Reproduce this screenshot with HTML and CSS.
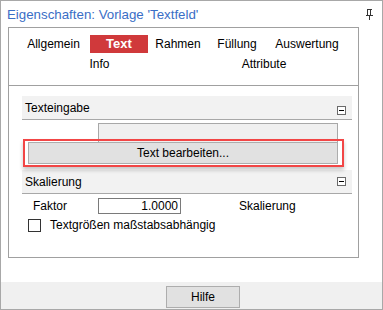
FILE: index.html
```html
<!DOCTYPE html>
<html>
<head>
<meta charset="utf-8">
<link rel="stylesheet" href="styles.css">
</head>
<body>
<div class="window">
  <div class="titlebar">
    <span class="title">Eigenschaften: Vorlage 'Textfeld'</span>
    <svg class="pin" width="7" height="11" viewBox="0 0 7 11">
      <rect x="1" y="0" width="5" height="1" fill="#333"/>
      <rect x="1.5" y="0.5" width="3" height="6" fill="none" stroke="#333" stroke-width="1"/>
      <rect x="0" y="6" width="7" height="1" fill="#333"/>
      <rect x="3" y="7" width="1" height="4" fill="#333"/>
    </svg>
  </div>
  <div class="panel">
    <div class="tabs">
      <div class="tabrow">
        <span class="tab w73">Allgemein</span>
        <span class="tab w58 active">Text</span>
        <span class="tab w60">Rahmen</span>
        <span class="tab w58">Füllung</span>
        <span class="tab w82">Auswertung</span>
      </div>
      <div class="tabrow second">
        <span class="tab info">Info</span>
        <span class="tab attr">Attribute</span>
      </div>
    </div>
    <div class="content">
      <div class="section-head">
        <span>Texteingabe</span>
        <span class="collapse"></span>
      </div>
      <div class="textbox"></div>
      <div class="btn wide">Text bearbeiten...</div>
      <div class="section-head second">
        <span>Skalierung</span>
        <span class="collapse"></span>
      </div>
      <div class="row faktor">
        <span class="label">Faktor</span>
        <span class="input">1.0000</span>
        <span class="label skal">Skalierung</span>
      </div>
      <div class="row check">
        <span class="checkbox"></span>
        <span class="label">Textgrößen maßstabsabhängig</span>
      </div>
    </div>
  </div>
  <div class="footer">
    <div class="btn hilfe">Hilfe</div>
  </div>
  <div class="highlight"></div>
</div>
</body>
</html>
```

FILE: styles.css
```css
html, body {
  margin: 0;
  padding: 0;
  background: #ffffff;
}
body {
  font-family: "Liberation Sans", Arial, sans-serif;
  font-size: 12px;
  color: #000;
}
.window {
  position: relative;
  width: 383px;
  height: 310px;
  box-sizing: border-box;
  border: 1px solid #a8a8a8;
  background: #fff;
  display: flex;
  flex-direction: column;
}
.titlebar {
  height: 26px;
  display: flex;
  align-items: center;
  padding-left: 6px;
  padding-right: 9px;
}
.title {
  font-size: 13.3px;
  color: #3a6ec6;
  position: relative;
  top: 0px;
}
.pin {
  margin-left: auto;
  display: block;
  position: relative;
  top: 0px;
}
.panel {
  margin: 0 23px 0 7px;
  height: 231px;
  box-sizing: border-box;
  border: 1px solid #a0a0a0;
  display: flex;
  flex-direction: column;
}
.tabs {
  padding: 6px 0 11px 8px;
  border-bottom: 1px solid #a0a0a0;
}
.tabrow {
  display: flex;
  height: 20px;
  align-items: center;
}
.tab {
  text-align: center;
  height: 18px;
  line-height: 18px;
  white-space: nowrap;
}
.w73 { width: 73px; }
.w58 { width: 58px; }
.w60 { width: 60px; }
.w82 { width: 82px; }
.tab.active {
  background: #d0393b;
  color: #fff;
  font-weight: bold;
  font-size: 13px;
}
.tab.info {
  width: 59px;
  margin-left: 53px;
}
.tab.attr {
  width: 58px;
  margin-left: 106px;
}
.content {
  display: flex;
  flex-direction: column;
  padding-top: 10px;
}
.section-head {
  margin: 0 6px 0 13px;
  height: 23px;
  background: #f2f2f2;
  border-bottom: 1px solid #a8a8a8;
  display: flex;
  align-items: center;
  padding: 0 6px 0 3px;
}
.section-head.second {
  margin-top: 6px;
}
.collapse {
  margin-left: auto;
  width: 9px;
  height: 9px;
  box-sizing: border-box;
  border: 1px solid #6a6a6a;
  background: #fff;
  position: relative;
  top: 3px;
}
.collapse::after {
  content: "";
  position: absolute;
  left: 1px;
  top: 3px;
  width: 5px;
  height: 1px;
  background: #000;
}
.section-head.second .collapse {
  top: 0px;
}
.textbox {
  margin: 3px 20px 0 89px;
  height: 19px;
  box-sizing: border-box;
  border: 1px solid #a8a8a8;
  border-bottom: none;
  background: #f0f0f0;
}
.btn {
  box-sizing: border-box;
  border: 1px solid #adadad;
  background: #e1e1e1;
  text-align: center;
  display: flex;
  align-items: center;
  justify-content: center;
}
.btn.wide {
  margin: 0 20px 0 19px;
  height: 22px;
}
.row {
  display: flex;
  align-items: center;
}
.row.faktor {
  margin-top: 4px;
  height: 16px;
  padding-left: 24px;
}
.row.faktor .label {
  width: 65px;
}
.input {
  width: 83px;
  height: 16px;
  box-sizing: border-box;
  border: 1px solid #7a7a7a;
  text-align: right;
  padding-right: 2px;
  line-height: 14px;
}
.row.faktor .label.skal {
  margin-left: 58px;
  width: auto;
}
.row.check {
  margin-top: 4px;
  padding-left: 19px;
  height: 14px;
}
.checkbox {
  width: 13px;
  height: 13px;
  box-sizing: border-box;
  border: 1px solid #333;
  background: #fff;
  margin-right: 9px;
}
.footer {
  margin-top: 24px;
  height: 27px;
  background: #f0f0f0;
  padding: 4px 0 0 165px;
  box-sizing: border-box;
}
.btn.hilfe {
  width: 74px;
  height: 22px;
}
.highlight {
  position: absolute;
  left: 22px;
  top: 138px;
  width: 321px;
  height: 28px;
  box-sizing: border-box;
  border: 2px solid #f24646;
  box-shadow: 0 3px 4px rgba(0, 0, 0, 0.22);
  pointer-events: none;
}
```
